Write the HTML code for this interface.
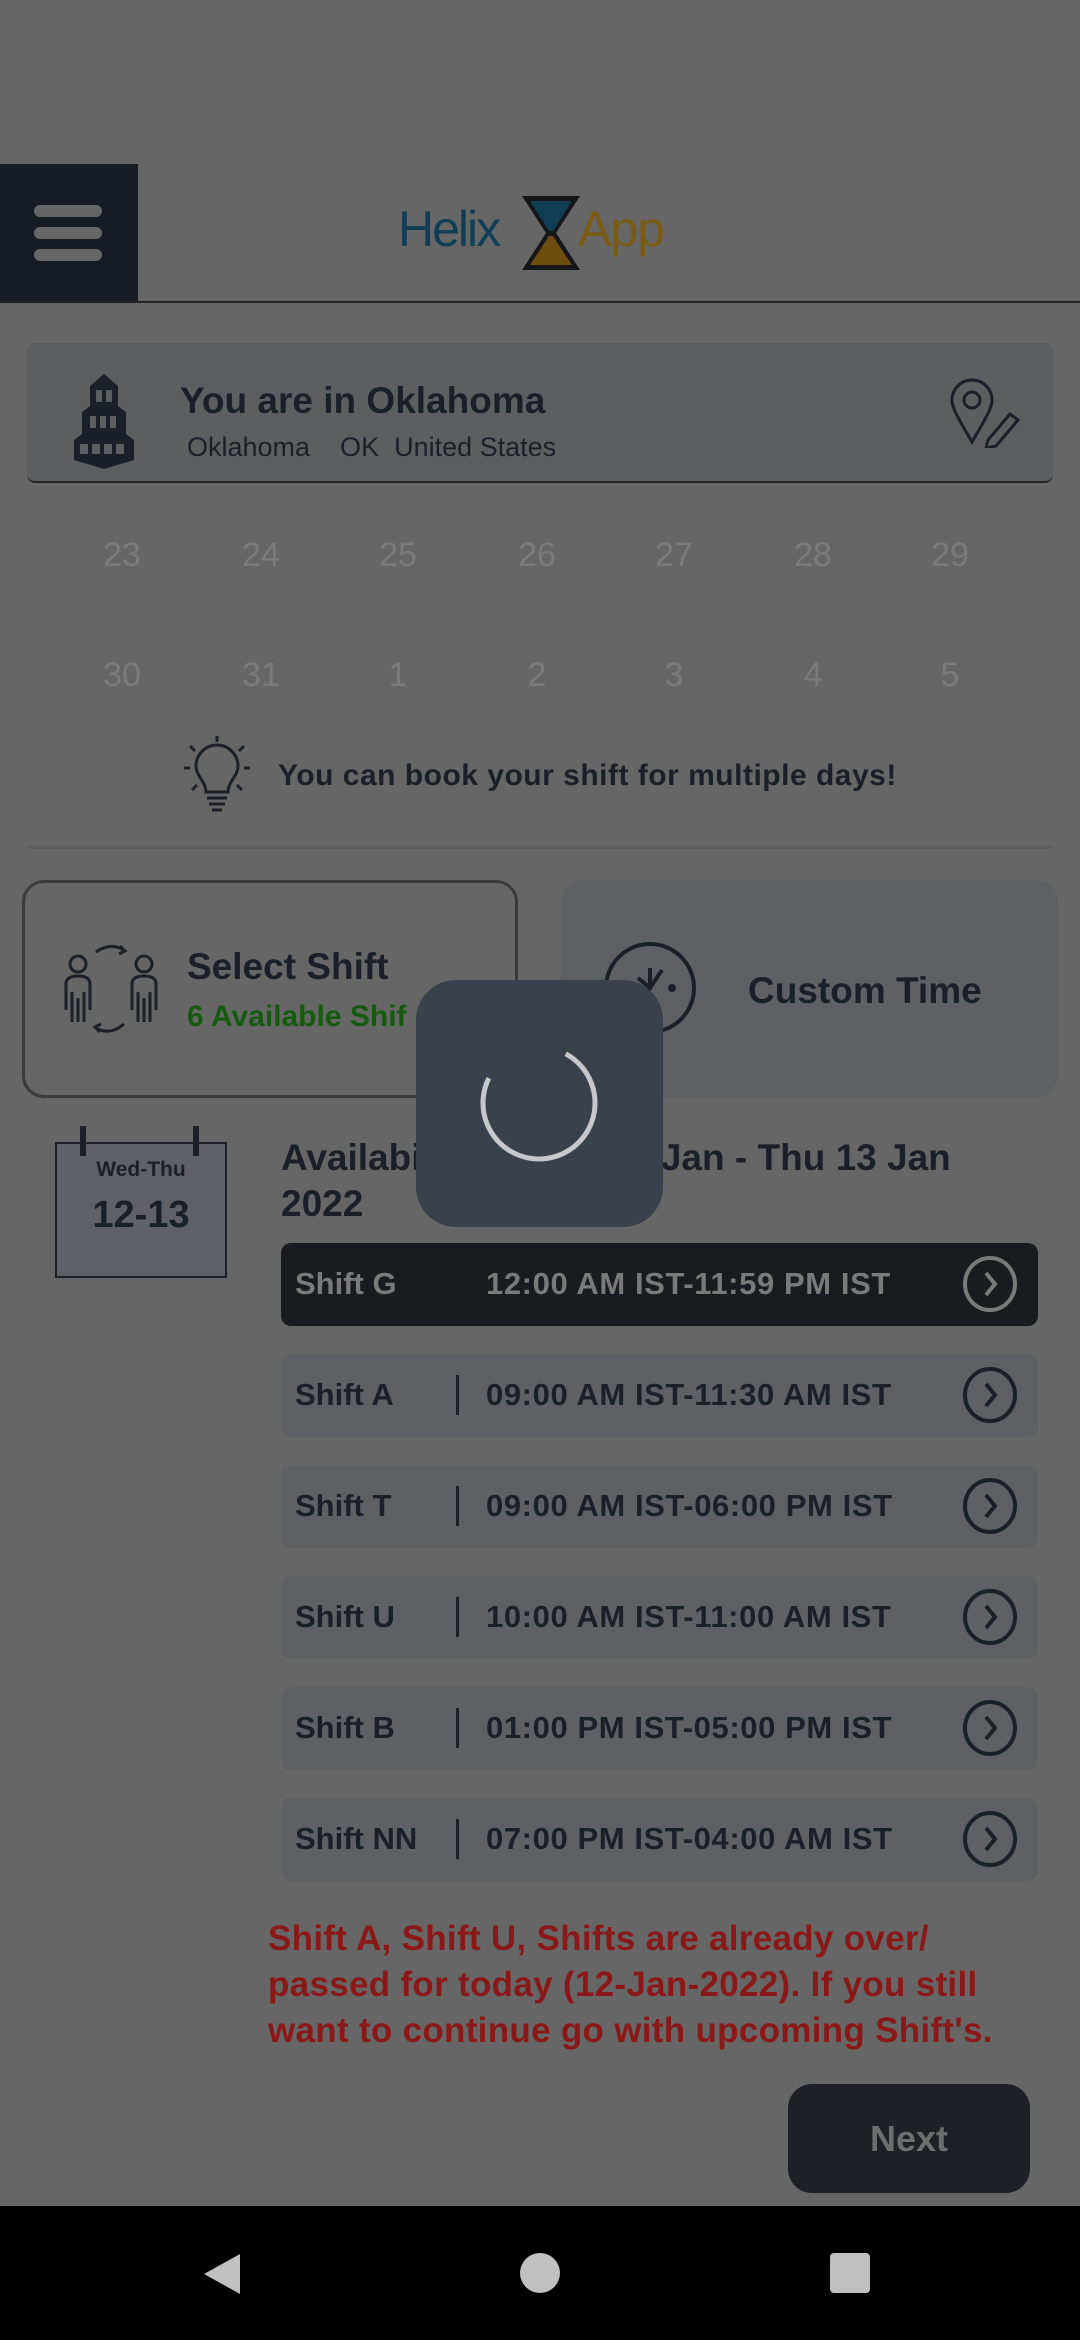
<!DOCTYPE html>
<html><head><meta charset="utf-8"><style>
*{margin:0;padding:0;box-sizing:border-box}
body{width:1080px;height:2340px;background:#666;position:relative;overflow:hidden;font-family:"Liberation Sans",sans-serif;color:#1b1f27}
.a{position:absolute}
.b{font-weight:bold}
.num{position:absolute;font-size:34px;color:#7b7b7b;width:80px;text-align:center;margin-left:-40px}
.row{position:absolute;left:281px;width:757px;height:83px;background:#5f6063;border-radius:10px}
.row .n{position:absolute;left:14px;top:23px;font-size:31px;font-weight:bold}
.row .d{position:absolute;left:175px;top:21px;width:3px;height:40px;background:#1b1f27}
.row .t{position:absolute;left:205px;top:23px;font-size:31px;font-weight:bold;letter-spacing:0.6px}
.row svg{position:absolute;left:681px;top:13px}
</style></head><body>
<div class="a" style="left:0;top:164px;width:138px;height:138px;background:#181d25"></div>
<div class="a" style="left:34px;top:205px;width:68px;height:12px;background:#666;border-radius:6px"></div>
<div class="a" style="left:34px;top:227px;width:68px;height:12px;background:#666;border-radius:6px"></div>
<div class="a" style="left:34px;top:249px;width:68px;height:12px;background:#666;border-radius:6px"></div>
<div class="a" style="left:0;top:301px;width:1080px;height:2px;background:#222"></div>
<div class="a" style="left:398px;top:200px;font-size:50px;color:#0f3e55;letter-spacing:-2px">Helix</div>
<svg class="a" style="left:522px;top:196px" width="58" height="74"><polygon points="0,0 58,0 34,37 58,74 0,74 24,37" fill="#15161a"/><polygon points="8,5 50,5 31,35 27,35" fill="#0f3e55"/><polygon points="27,40 31,40 50,69 8,69" fill="#6b4d0e"/></svg>
<div class="a" style="left:578px;top:200px;font-size:50px;color:#7a5b14;letter-spacing:-1px">App</div>

<div class="a" style="left:27px;top:343px;width:1026px;height:140px;background:#5d5e60;border-radius:8px;border-bottom:2px solid #222"></div>
<svg class="a" style="left:72px;top:372px" width="64" height="98"><path d="M32 2 L46 14 V34 L54 40 V62 L62 68 V88 L32 97 L2 88 V68 L10 62 V40 L18 34 V14 Z" fill="#1b1f27"/><g fill="#5d5e60"><rect x="24" y="18" width="6" height="12"/><rect x="34" y="18" width="6" height="12"/><rect x="18" y="44" width="6" height="12"/><rect x="28" y="44" width="6" height="12"/><rect x="38" y="44" width="6" height="12"/><rect x="8" y="72" width="8" height="10"/><rect x="20" y="72" width="8" height="10"/><rect x="32" y="72" width="8" height="10"/><rect x="44" y="72" width="8" height="10"/></g></svg>
<div class="a b" style="left:180px;top:380px;font-size:37px">You are in Oklahoma</div>
<div class="a" style="left:187px;top:432px;font-size:27px">Oklahoma &nbsp;&nbsp;&nbsp;OK &nbsp;United States</div>
<svg class="a" style="left:948px;top:378px" width="76" height="70" fill="none" stroke="#1b1f27" stroke-width="3"><path d="M24 64 C10 40 4 30 4 22 A20 20 0 0 1 44 22 C44 30 38 40 24 64Z"/><circle cx="24" cy="22" r="8"/><path d="M40 62 L62 36 L70 42 L48 68 L38 70 Z"/></svg>

<div class="num" style="left:122px;top:536px">23</div><div class="num" style="left:261px;top:536px">24</div><div class="num" style="left:398px;top:536px">25</div><div class="num" style="left:537px;top:536px">26</div><div class="num" style="left:674px;top:536px">27</div><div class="num" style="left:813px;top:536px">28</div><div class="num" style="left:950px;top:536px">29</div>
<div class="num" style="left:122px;top:656px">30</div><div class="num" style="left:261px;top:656px">31</div><div class="num" style="left:398px;top:656px">1</div><div class="num" style="left:537px;top:656px">2</div><div class="num" style="left:674px;top:656px">3</div><div class="num" style="left:813px;top:656px">4</div><div class="num" style="left:950px;top:656px">5</div>

<svg class="a" style="left:182px;top:734px" width="70" height="84" fill="none" stroke="#1b1f27" stroke-width="3"><path d="M24 58 C24 48 14 42 14 32 A21 21 0 0 1 56 32 C56 42 46 48 46 58 Z"/><path d="M25 64H45M27 70H43M30 76H40"/><path d="M35 2V8M8 12L13 17M62 12L57 17M2 34H8M62 34H68M10 56L15 51M60 56L55 51"/></svg>
<div class="a b" style="left:278px;top:759px;font-size:30px;letter-spacing:0.5px">You can book your shift for multiple days!</div>
<div class="a" style="left:27px;top:846px;width:1026px;height:3px;background:#5e5e5e"></div>

<div class="a" style="left:22px;top:880px;width:496px;height:218px;border:3px solid #3a3a3a;border-radius:22px;background:#666"></div>
<svg class="a" style="left:60px;top:940px" width="104" height="100" fill="none" stroke="#1b1f27" stroke-width="3"><circle cx="18" cy="24" r="8"/><circle cx="84" cy="24" r="8"/><path d="M6 70V44Q6 36 18 36Q30 36 30 44V70M12 52V82M18 58V82M24 52V82"/><path d="M72 70V44Q72 36 84 36Q96 36 96 44V70M78 52V82M84 58V82M90 52V82"/><path d="M36 12Q50 2 64 10M60 6L65 11L59 14"/><path d="M64 84Q50 96 36 88M40 92L35 87L41 84"/></svg>
<div class="a b" style="left:187px;top:946px;font-size:37px">Select Shift</div>
<div class="a b" style="left:187px;top:1000px;font-size:30px;color:#165a0f">6 Available Shif</div>

<div class="a" style="left:561px;top:880px;width:497px;height:218px;background:#5f6063;border-radius:22px"></div>
<svg class="a" style="left:600px;top:938px" width="100" height="100" fill="none" stroke="#1b1f27" stroke-width="4"><circle cx="50" cy="50" r="44"/><path d="M50 30V50L62 32M50 50L38 40"/><circle cx="72" cy="50" r="2" fill="#1b1f27"/></svg>
<div class="a b" style="left:748px;top:970px;font-size:37px">Custom Time</div>

<svg class="a" style="left:55px;top:1126px" width="172" height="152"><rect x="1" y="17" width="170" height="134" fill="#5f6167" stroke="#1b1f27" stroke-width="2"/><rect x="25" y="0" width="6" height="30" fill="#1b1f27"/><rect x="138" y="0" width="6" height="30" fill="#1b1f27"/></svg>
<div class="a b" style="left:55px;top:1158px;width:172px;text-align:center;font-size:21px">Wed-Thu</div>
<div class="a b" style="left:55px;top:1194px;width:172px;text-align:center;font-size:38px">12-13</div>
<div class="a b" style="left:281px;top:1135px;font-size:37px;line-height:46px">Availability<br>2022</div>
<div class="a b" style="left:630px;top:1135px;font-size:37px;line-height:46px">2 Jan - Thu 13 Jan</div>

<div class="row" style="top:1243px;background:#1a1b1f;color:#777"><div class="n" style="color:#7a7a7a">Shift G</div><div class="t" style="color:#7a7a7a">12:00 AM IST-11:59 PM IST</div><svg width="56" height="56" fill="none" stroke="#7a7a7a" stroke-width="4"><ellipse cx="28" cy="28" rx="25" ry="26"/><path d="M24 17L33 28L24 39"/></svg></div>
<div class="row" style="top:1354px"><div class="n">Shift A</div><div class="d"></div><div class="t">09:00 AM IST-11:30 AM IST</div><svg width="56" height="56" fill="none" stroke="#1b1f27" stroke-width="4"><ellipse cx="28" cy="28" rx="25" ry="26"/><path d="M24 17L33 28L24 39"/></svg></div>
<div class="row" style="top:1465px"><div class="n">Shift T</div><div class="d"></div><div class="t">09:00 AM IST-06:00 PM IST</div><svg width="56" height="56" fill="none" stroke="#1b1f27" stroke-width="4"><ellipse cx="28" cy="28" rx="25" ry="26"/><path d="M24 17L33 28L24 39"/></svg></div>
<div class="row" style="top:1576px"><div class="n">Shift U</div><div class="d"></div><div class="t">10:00 AM IST-11:00 AM IST</div><svg width="56" height="56" fill="none" stroke="#1b1f27" stroke-width="4"><ellipse cx="28" cy="28" rx="25" ry="26"/><path d="M24 17L33 28L24 39"/></svg></div>
<div class="row" style="top:1687px"><div class="n">Shift B</div><div class="d"></div><div class="t">01:00 PM IST-05:00 PM IST</div><svg width="56" height="56" fill="none" stroke="#1b1f27" stroke-width="4"><ellipse cx="28" cy="28" rx="25" ry="26"/><path d="M24 17L33 28L24 39"/></svg></div>
<div class="row" style="top:1798px"><div class="n">Shift NN</div><div class="d"></div><div class="t">07:00 PM IST-04:00 AM IST</div><svg width="56" height="56" fill="none" stroke="#1b1f27" stroke-width="4"><ellipse cx="28" cy="28" rx="25" ry="26"/><path d="M24 17L33 28L24 39"/></svg></div>

<div class="a b" style="left:268px;top:1916px;font-size:35px;line-height:46px;color:#8a1818;letter-spacing:0.3px">Shift A, Shift U, Shifts are already over/<br>passed for today (12-Jan-2022). If you still<br>want to continue go with upcoming Shift's.</div>

<div class="a b" style="left:788px;top:2084px;width:242px;height:109px;background:#1e2026;border-radius:24px;color:#6e6e6e;font-size:36px;text-align:center;line-height:109px">Next</div>

<div class="a" style="left:416px;top:980px;width:247px;height:247px;background:#3a404c;border-radius:40px"></div>
<svg class="a" style="left:476px;top:1040px" width="127" height="127"><circle cx="63" cy="63" r="56" fill="none" stroke="#c8c8cc" stroke-width="5" stroke-dasharray="260 90" transform="rotate(-60 63 63)"/></svg>

<div class="a" style="left:0;top:2206px;width:1080px;height:134px;background:#000"></div>
<svg class="a" style="left:200px;top:2250px" width="48" height="48"><polygon points="4,24 40,4 40,44" fill="#c0c0c0"/></svg>
<div class="a" style="left:520px;top:2253px;width:40px;height:40px;border-radius:50%;background:#c0c0c0"></div>
<div class="a" style="left:830px;top:2253px;width:40px;height:40px;border-radius:4px;background:#c0c0c0"></div>
</body></html>
